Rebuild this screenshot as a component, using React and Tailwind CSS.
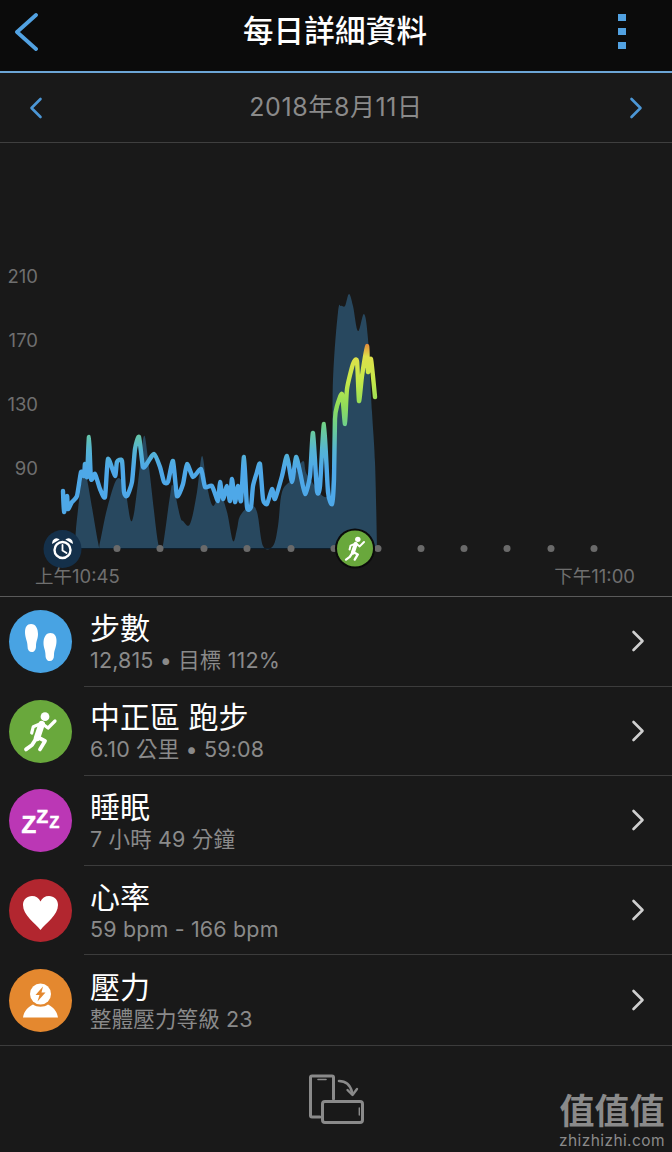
import React from "react";

const area = [[76,549],[76,530],[83,473],[87,480],[98,543],[100,543],[107,510],[117,480],[125,490],[132,522],[140,467],[144,437],[148,460],[157,537],[160,546],[163,546],[170,497],[173,487],[180,517],[183,522],[190,525],[197,493],[202,457],[207,487],[213,507],[220,495],[227,513],[233,542],[237,530],[240,517],[250,507],[257,513],[263,547],[273,547],[278,527],[282,493],[292,480],[303,462],[308,477],[330,493],[333,380],[338,313],[341,307],[345,307],[349,295],[353,307],[358,332],[364,315],[368,340],[372,413],[375,463],[377,549]];
const line = [[63,492],[64,513],[67,497],[68,510],[72,503],[77,497],[81,473],[84,477],[85,465],[87,478],[89,438],[91,480],[95,475],[100,490],[105,498],[108,460],[115,477],[117,463],[122,462],[124,493],[127,497],[132,483],[135,450],[139,438],[143,468],[148,463],[154,455],[160,468],[164,483],[168,483],[173,462],[177,497],[183,485],[187,465],[193,478],[201,470],[205,488],[212,487],[218,502],[220,483],[223,500],[227,487],[230,502],[232,480],[235,503],[238,487],[241,502],[244,458],[247,508],[251,508],[253,487],[257,473],[260,465],[263,500],[267,505],[272,490],[275,500],[282,477],[287,457],[292,483],[296,458],[300,473],[305,495],[310,477],[313,434],[317,492],[320,487],[324,425],[328,493],[332,505],[334,480],[335,420],[337,407],[342,395],[345,425],[347,390],[353,365],[357,362],[359,402],[362,377],[367,347],[368,373],[371,360],[375,398]];
const dots = [117,160,204,247,291,334,378,421,464,507,551,594];
const ticks = [["210",284],["170",348],["130",412],["90",476]];

function smooth(pts, k) {
  let d = `M${pts[0][0]} ${pts[0][1]}`;
  for (let i = 0; i < pts.length - 1; i++) {
    const p0 = pts[i - 1] || pts[i];
    const p1 = pts[i];
    const p2 = pts[i + 1];
    const p3 = pts[i + 2] || p2;
    const c1x = p1[0] + (p2[0] - p0[0]) * k;
    const c1y = p1[1] + (p2[1] - p0[1]) * k;
    const c2x = p2[0] - (p3[0] - p1[0]) * k;
    const c2y = p2[1] - (p3[1] - p1[1]) * k;
    d += ` C${c1x.toFixed(1)} ${c1y.toFixed(1)} ${c2x.toFixed(1)} ${c2y.toFixed(1)} ${p2[0]} ${p2[1]}`;
  }
  return d;
}

function Chevron({ dir = "right", className }) {
  return (
    <svg viewBox="0 0 14 22" className={className} fill="none" stroke="currentColor" strokeWidth="2.6" strokeLinecap="round" strokeLinejoin="round">
      <path d={dir === "right" ? "M2.5 2 L11.5 11 L2.5 20" : "M11.5 2 L2.5 11 L11.5 20"} />
    </svg>
  );
}

function Feet() {
  const d = "M22 14 C27 14 29 19 29 24 C29 29 27 31 27 36 C27 40 25 42 23 42 C20 42 18.5 40 18.5 36 C18.5 31 16 28 16 22 C16 17 18 14 22 14Z";
  return (
    <svg viewBox="0 0 63 63" className="w-full h-full" fill="#fff">
      <path d={d} />
      <path d={d} transform="translate(63 9) scale(-1 1) translate(-0.5 0)" />
    </svg>
  );
}

function Zzz() {
  return (
    <svg viewBox="0 0 63 63" className="w-full h-full" fill="#fff" stroke="#fff" strokeWidth="0.7" fontFamily="'Liberation Sans', sans-serif" fontWeight="700">
      <text x="12.5" y="44" fontSize="24">Z</text>
      <text x="27.5" y="34" fontSize="19">Z</text>
      <text x="40.5" y="39" fontSize="16">Z</text>
    </svg>
  );
}

function Heart() {
  return (
    <svg viewBox="0 0 63 63" className="w-full h-full">
      <path fill="#fff" d="M31.5 51 C26 44 14 36 14 26 C14 20.5 18 17 23 17 C27 17 30 19 31.5 22.5 C33 19 36 17 40 17 C45 17 49 20.5 49 26 C49 36 37 44 31.5 51Z" />
    </svg>
  );
}

function Stress() {
  return (
    <svg viewBox="0 0 63 63" className="w-full h-full">
      <circle cx="31.5" cy="25" r="10.5" fill="#fff" />
      <path fill="#e4882f" d="M34 17.5 L26.5 26 L30.5 26 L28.5 32.5 L36.5 23.5 L32.5 23.5 Z" />
      <path fill="#fff" d="M14 48.5 C15 42 19 38 24 35.5 C28 38.5 35 38.5 39 35.5 C44 38 48 42 49 48.5 Z" />
    </svg>
  );
}

function RunnerShape() {
  return (
    <g fill="none" stroke="#fff" strokeLinecap="round" strokeLinejoin="round">
      <circle cx="36" cy="16.7" r="4.4" fill="#fff" stroke="none" />
      <path d="M32.7 24 L28 38" strokeWidth="6.5" />
      <path d="M32 23.5 L24.3 26.7 L22.7 33" strokeWidth="3.2" />
      <path d="M33 23.5 L39 28 L46 21" strokeWidth="3.2" />
      <path d="M27.5 38 L23 45 L17 49.4" strokeWidth="3.8" />
      <path d="M28.5 37 L36 41 L31 49.4" strokeWidth="3.8" />
    </g>
  );
}

function Run() {
  return (
    <svg viewBox="0 0 63 63" className="w-full h-full">
      <RunnerShape />
    </svg>
  );
}

const rows = [
  { title: "步數", sub: "12,815 • 目標 112%", bg: "bg-[#48a3e3]", icon: <Feet /> },
  { title: "中正區 跑步", sub: "6.10 公里 • 59:08", bg: "bg-[#69a83c]", icon: <Run /> },
  { title: "睡眠", sub: "7 小時 49 分鐘", bg: "bg-[#bb37b5]", icon: <Zzz /> },
  { title: "心率", sub: "59 bpm - 166 bpm", bg: "bg-[#b2262f]", icon: <Heart /> },
  { title: "壓力", sub: "整體壓力等級 23", bg: "bg-[#e4882f]", icon: <Stress /> },
];

function Chart() {
  return (
    <svg viewBox="0 144 672 453" className="block w-full h-[453px]">
      <defs>
        <linearGradient id="hr" gradientUnits="userSpaceOnUse" x1="0" y1="345" x2="0" y2="470">
          <stop offset="0" stopColor="#e58a3a" />
          <stop offset="0.1" stopColor="#dfe04a" />
          <stop offset="0.3" stopColor="#c4e84a" />
          <stop offset="0.5" stopColor="#8fdc5a" />
          <stop offset="0.65" stopColor="#6fd08a" />
          <stop offset="0.85" stopColor="#55b4d4" />
          <stop offset="1" stopColor="#4ea8e8" />
        </linearGradient>
      </defs>
      {ticks.map(([t, y]) => (
        <text key={t} x="38" y={y} textAnchor="end" fontSize="18.5" fill="#6f6f6f">{t}</text>
      ))}
      <path d={smooth(area, 0.17) + " Z"} fill="#28485f" />
      <line x1="62" y1="549.5" x2="378" y2="549.5" stroke="#0e1f2d" strokeWidth="1" />
      <path d={smooth(line, 0.1)} fill="none" stroke="url(#hr)" strokeWidth="4.4" strokeLinejoin="round" strokeLinecap="round" />
      {dots.map((x) => (
        <circle key={x} cx={x} cy="549.5" r="3.5" fill="#6a6a6a" />
      ))}
      <circle cx="62.5" cy="550" r="19" fill="#14304a" />
      <g fill="none" stroke="#fff" strokeLinecap="round">
        <circle cx="62.5" cy="551" r="8" strokeWidth="2.4" />
        <path d="M62.5 546 V551.5 L66.5 554" strokeWidth="1.8" />
        <path d="M53 543.5 A3.5 3.5 0 0 1 58 540.5 Z" strokeWidth="1.6" fill="#fff" />
        <path d="M72 543.5 A3.5 3.5 0 0 0 67 540.5 Z" strokeWidth="1.6" fill="#fff" />
      </g>
      <circle cx="355" cy="549.5" r="20" fill="#0b0b0b" />
      <circle cx="355" cy="549.5" r="18" fill="#69a83c" />
      <g transform="translate(335.5 530) scale(0.62)">
        <RunnerShape />
      </g>
      <text x="35" y="584" fontSize="18.5" fill="#6f6f6f">上午10:45</text>
      <text x="635" y="584" textAnchor="end" fontSize="18.5" fill="#6f6f6f">下午11:00</text>
    </svg>
  );
}

export default function App() {
  return (
    <div className="w-[672px] h-[1152px] overflow-hidden flex flex-col bg-[#191919] font-['Inter','Noto_Sans_CJK_TC',sans-serif]">
      <header className="h-[71px] shrink-0 bg-[#0b0b0b] flex items-center justify-between pl-[15px] pr-[46px] pb-[8px]">
        <svg viewBox="0 0 23 38" className="w-[23px] h-[38px] text-[#52a2e2]" fill="none" stroke="currentColor" strokeWidth="3.8" strokeLinecap="round" strokeLinejoin="round">
          <path d="M21 2 L2 19 L21 36" />
        </svg>
        <h1 className="text-[30.5px] leading-none font-medium text-white ml-[14px] tracking-[0.2px]">每日詳細資料</h1>
        <div className="flex flex-col gap-[7px]">
          <span className="block w-[8px] h-[7px] bg-[#52a2e2]" />
          <span className="block w-[8px] h-[7px] bg-[#52a2e2]" />
          <span className="block w-[8px] h-[7px] bg-[#52a2e2]" />
        </div>
      </header>
      <div className="h-[2px] shrink-0 bg-[#6ca5d6]" />
      <div className="h-[70px] shrink-0 flex items-center justify-between px-[29px] border-b border-[#3f3f3f]">
        <Chevron dir="left" className="w-[14px] h-[22px] text-[#4c97d6]" />
        <span className="text-[25px] leading-none text-[#8a8a8a] tracking-[0.6px]">2018年8月11日</span>
        <Chevron className="w-[14px] h-[22px] text-[#4c97d6]" />
      </div>
      <Chart />
      <div className="h-[1px] shrink-0 bg-[#5a5a5a]" />
      <ul className="shrink-0">
        {rows.map((r, i) => (
          <li key={r.title} className="flex h-[89.6px]">
            <div className="w-[84px] shrink-0 flex items-center pl-[9px]">
              <div className={`w-[63px] h-[63px] rounded-full flex items-center justify-center ${r.bg}`}>{r.icon}</div>
            </div>
            <div className={i === rows.length - 1 ? "flex-1 flex items-center justify-between pl-[6px] pr-[27px]" : "flex-1 flex items-center justify-between pl-[6px] pr-[27px] border-b border-[#3c3c3c]"}>
              <div className="flex flex-col pt-[1px]">
                <span className="text-[30px] leading-[34px] text-white">{r.title}</span>
                <span className="text-[21.5px] leading-[26px] mt-[2px] text-[#8a8a8a] tracking-[0.15px]">{r.sub}</span>
              </div>
              <Chevron className="w-[14px] h-[22px] text-[#cfcfcf]" />
            </div>
          </li>
        ))}
      </ul>
      <div className="h-[1px] shrink-0 bg-[#3c3c3c]" />
      <footer className="relative flex-1 flex justify-center pt-[25px]">
        <svg viewBox="0 0 62 56" className="w-[62px] h-[56px]" fill="none" stroke="#8a8a8a" strokeWidth="3" strokeLinejoin="round" strokeLinecap="round">
          <path d="M15 46 H7 Q5.5 46 5.5 44.5 V6.5 Q5.5 5 7 5 H27 Q28.5 5 28.5 6.5 V28" />
          <path d="M13 8.5 H21" strokeWidth="1.6" />
          <rect x="17.5" y="30.5" width="40" height="21" rx="2.5" />
          <path d="M54.3 37 V44" strokeWidth="1.4" />
          <path d="M34 10 C40 10 45 13 47 21" strokeWidth="2.6" />
          <path d="M42.5 19 L47.5 24 L52 18" strokeWidth="2.4" />
        </svg>
        <div className="absolute left-[559px] top-[46px] w-[106px] flex flex-col items-center text-[#8a8a8a]">
          <span className="text-[35px] leading-[38px] font-bold whitespace-nowrap">值值值</span>
          <span className="text-[15.5px] leading-[18px] tracking-[0.4px] mt-[2px] whitespace-nowrap">zhizhizhi.com</span>
        </div>
      </footer>
    </div>
  );
}
